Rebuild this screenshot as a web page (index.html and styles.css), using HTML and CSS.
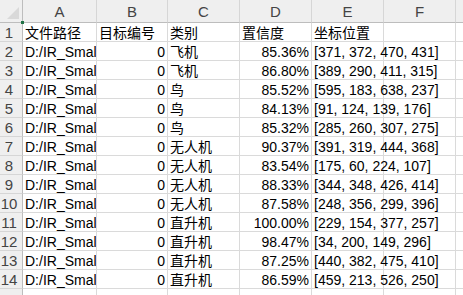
FILE: index.html
```html
<!DOCTYPE html>
<html lang="zh">
<head>
    <meta charset="UTF-8">
    <title>Sheet1</title>
    <link rel="stylesheet" href="styles.css">
</head>
<body>
    <div class="sheet">
        <div class="corner"><span class="tri"></span><span class="dot"></span></div>
        <div class="col-head">A</div>
        <div class="col-head">B</div>
        <div class="col-head">C</div>
        <div class="col-head">D</div>
        <div class="col-head">E</div>
        <div class="col-head">F</div>
        <div class="col-head tail"></div>

        <div class="row-head">1</div>
        <div class="cell">文件路径</div>
        <div class="cell">目标编号</div>
        <div class="cell">类别</div>
        <div class="cell">置信度</div>
        <div class="cell over">坐标位置</div>
        <div class="cell"></div>
        <div class="cell tail"></div>

        <div class="row-head">2</div>
        <div class="cell clip">D:/IR_Smal</div>
        <div class="cell num">0</div>
        <div class="cell">飞机</div>
        <div class="cell num">85.36%</div>
        <div class="cell over">[371, 372, 470, 431]</div>
        <div class="cell"></div>
        <div class="cell tail"></div>

        <div class="row-head">3</div>
        <div class="cell clip">D:/IR_Smal</div>
        <div class="cell num">0</div>
        <div class="cell">飞机</div>
        <div class="cell num">86.80%</div>
        <div class="cell over">[389, 290, 411, 315]</div>
        <div class="cell"></div>
        <div class="cell tail"></div>

        <div class="row-head">4</div>
        <div class="cell clip">D:/IR_Smal</div>
        <div class="cell num">0</div>
        <div class="cell">鸟</div>
        <div class="cell num">85.52%</div>
        <div class="cell over">[595, 183, 638, 237]</div>
        <div class="cell"></div>
        <div class="cell tail"></div>

        <div class="row-head">5</div>
        <div class="cell clip">D:/IR_Smal</div>
        <div class="cell num">0</div>
        <div class="cell">鸟</div>
        <div class="cell num">84.13%</div>
        <div class="cell over">[91, 124, 139, 176]</div>
        <div class="cell"></div>
        <div class="cell tail"></div>

        <div class="row-head">6</div>
        <div class="cell clip">D:/IR_Smal</div>
        <div class="cell num">0</div>
        <div class="cell">鸟</div>
        <div class="cell num">85.32%</div>
        <div class="cell over">[285, 260, 307, 275]</div>
        <div class="cell"></div>
        <div class="cell tail"></div>

        <div class="row-head">7</div>
        <div class="cell clip">D:/IR_Smal</div>
        <div class="cell num">0</div>
        <div class="cell">无人机</div>
        <div class="cell num">90.37%</div>
        <div class="cell over">[391, 319, 444, 368]</div>
        <div class="cell"></div>
        <div class="cell tail"></div>

        <div class="row-head">8</div>
        <div class="cell clip">D:/IR_Smal</div>
        <div class="cell num">0</div>
        <div class="cell">无人机</div>
        <div class="cell num">83.54%</div>
        <div class="cell over">[175, 60, 224, 107]</div>
        <div class="cell"></div>
        <div class="cell tail"></div>

        <div class="row-head">9</div>
        <div class="cell clip">D:/IR_Smal</div>
        <div class="cell num">0</div>
        <div class="cell">无人机</div>
        <div class="cell num">88.33%</div>
        <div class="cell over">[344, 348, 426, 414]</div>
        <div class="cell"></div>
        <div class="cell tail"></div>

        <div class="row-head">10</div>
        <div class="cell clip">D:/IR_Smal</div>
        <div class="cell num">0</div>
        <div class="cell">无人机</div>
        <div class="cell num">87.58%</div>
        <div class="cell over">[248, 356, 299, 396]</div>
        <div class="cell"></div>
        <div class="cell tail"></div>

        <div class="row-head">11</div>
        <div class="cell clip">D:/IR_Smal</div>
        <div class="cell num">0</div>
        <div class="cell">直升机</div>
        <div class="cell num">100.00%</div>
        <div class="cell over">[229, 154, 377, 257]</div>
        <div class="cell"></div>
        <div class="cell tail"></div>

        <div class="row-head">12</div>
        <div class="cell clip">D:/IR_Smal</div>
        <div class="cell num">0</div>
        <div class="cell">直升机</div>
        <div class="cell num">98.47%</div>
        <div class="cell over">[34, 200, 149, 296]</div>
        <div class="cell"></div>
        <div class="cell tail"></div>

        <div class="row-head">13</div>
        <div class="cell clip">D:/IR_Smal</div>
        <div class="cell num">0</div>
        <div class="cell">直升机</div>
        <div class="cell num">87.25%</div>
        <div class="cell over">[440, 382, 475, 410]</div>
        <div class="cell"></div>
        <div class="cell tail"></div>

        <div class="row-head">14</div>
        <div class="cell clip">D:/IR_Smal</div>
        <div class="cell num">0</div>
        <div class="cell">直升机</div>
        <div class="cell num">86.59%</div>
        <div class="cell over">[459, 213, 526, 250]</div>
        <div class="cell"></div>
        <div class="cell tail"></div>

        <div class="row-head"></div>
        <div class="cell"></div>
        <div class="cell"></div>
        <div class="cell"></div>
        <div class="cell"></div>
        <div class="cell"></div>
        <div class="cell"></div>
        <div class="cell tail"></div>
    </div>
</body>
</html>
```

FILE: styles.css
```css
html, body {
    margin: 0;
    padding: 0;
    background: #ffffff;
    overflow: hidden;
}
.sheet {
    display: grid;
    grid-template-columns: 23px 74px 71px 72px 72px 72px 72px 1fr;
    grid-template-rows: 23px repeat(15, 19px);
    width: 463px;
    font-family: "Liberation Sans", "Noto Sans CJK SC", sans-serif;
    font-size: 14px;
    color: #000;
}
.corner {
    position: relative;
    background: #efefef;
    border-right: 1px solid #bdbdbd;
    border-bottom: 1px solid #bdbdbd;
}
.corner .tri {
    position: absolute;
    right: 3px;
    bottom: 3px;
    width: 0;
    height: 0;
    border-left: 12px solid transparent;
    border-bottom: 12px solid #d9d9d9;
}
.corner .dot {
    position: absolute;
    right: -2px;
    bottom: -2px;
    width: 3px;
    height: 3px;
    background: #217346;
    z-index: 2;
}
.col-head {
    background: #efefef;
    border-right: 1px solid #d6d6d6;
    border-bottom: 1px solid #bdbdbd;
    text-align: center;
    font-family: "Liberation Sans", sans-serif;
    font-size: 15px;
    line-height: 24px;
    color: #444;
}
.row-head {
    background: #efefef;
    border-right: 1px solid #bdbdbd;
    border-bottom: 1px solid #d6d6d6;
    padding-right: 4px;
    text-align: center;
    font-size: 15px;
    line-height: 20px;
    color: #444;
}
.cell {
    border-right: 1px solid #dadada;
    border-bottom: 1px solid #dadada;
    padding: 0 2px;
    line-height: 20px;
    white-space: nowrap;
    overflow: hidden;
}
.cell.clip {
    padding-right: 0;
    text-overflow: clip;
}
.cell.over {
    overflow: visible;
    position: relative;
    z-index: 1;
}
.cell.num {
    text-align: right;
}
.tail {
    border-right: none;
}
```
